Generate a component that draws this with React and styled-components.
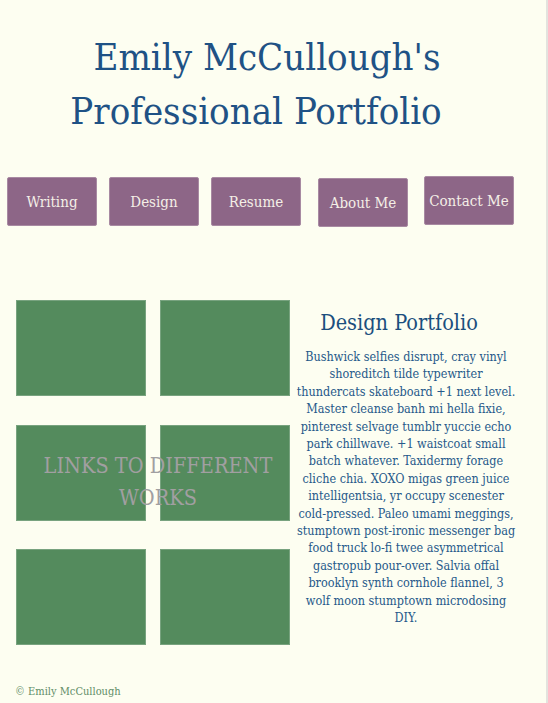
import styled, {createGlobalStyle} from 'styled-components'

const GlobalStyle = createGlobalStyle`
  html, body {
    margin: 0;
    padding: 0;
    background: #fdfef1;
  }
  * {
    box-sizing: border-box;
  }
`

const slab = `"DejaVu Serif Condensed", "DejaVu Serif", serif`

const Page = styled.div`
  min-height: 703px;
  border-right: 2px solid #e3e3de;
  font-family: ${slab};
  font-stretch: condensed;
  overflow: hidden;
`

const Title = styled.h1`
  margin: 30px 0 0 0;
  text-align: center;
  font-size: 38px;
  line-height: 54px;
  font-weight: normal;
  color: #1f5285;
`

const TitleLine = styled.span`
  display: block;
  padding-right: ${(p) => p.$pull}px;
`

const Nav = styled.nav`
  display: flex;
  align-items: flex-start;
  margin: 39px 0 0 0;
  padding-left: 7px;
`

const NavButton = styled.a`
  display: flex;
  align-items: center;
  justify-content: center;
  width: 90px;
  height: 49px;
  margin-left: ${(p) => p.$gap}px;
  margin-top: ${(p) => p.$shift}px;
  background: #8d6687;
  border: 1px solid #a88aa2;
  border-radius: 2px;
  color: #f4efe6;
  font-size: 15px;
  text-decoration: none;
`

const Main = styled.main`
  display: flex;
  align-items: flex-start;
  margin-top: 73px;
  padding-left: 16px;
`

const Gallery = styled.div`
  position: relative;
  display: grid;
  grid-template-columns: 130px 130px;
  column-gap: 14px;
  row-gap: 28.5px;
`

const Tile = styled.div`
  height: 96px;
  background: #548b5d;
  border: 1px solid #78a37f;
`

const Overlay = styled.p`
  position: absolute;
  top: 150px;
  left: 0;
  right: 0;
  margin: 0;
  padding-left: 10px;
  text-align: center;
  font-size: 21.5px;
  line-height: 32px;
  color: #a19fa1;
`

const Column = styled.section`
  width: 220px;
  margin-left: 6px;
  text-align: center;
`

const Heading = styled.h2`
  margin: 10px 0 0 0;
  padding-right: 14px;
  font-size: 21.5px;
  line-height: 26px;
  font-weight: normal;
  color: #1b4f7e;
`

const Text = styled.p`
  margin: 12px 0 0 0;
  font-size: 12.5px;
  line-height: 17.4px;
  color: #26598a;
`

const Footer = styled.footer`
  margin-top: 40px;
  padding-left: 15px;
  font-size: 11px;
  line-height: 14px;
  color: #5f8d67;
`

const links = [
  {label: 'Writing', gap: 0, shift: 0},
  {label: 'Design', gap: 12, shift: 0},
  {label: 'Resume', gap: 12, shift: 0},
  {label: 'About Me', gap: 17, shift: 1},
  {label: 'Contact Me', gap: 16, shift: -1},
]

const App = () => {
  return (
    <Page>
      <GlobalStyle />
      <Title>
        <TitleLine $pull={12}>Emily McCullough's</TitleLine>
        <TitleLine $pull={34}>Professional Portfolio</TitleLine>
      </Title>
      <Nav>
        {links.map((l) => (
          <NavButton key={l.label} href="#" $gap={l.gap} $shift={l.shift}>
            {l.label}
          </NavButton>
        ))}
      </Nav>
      <Main>
        <Gallery>
          {Array.from({length: 6}).map((_, i) => (
            <Tile key={i} />
          ))}
          <Overlay>
            LINKS TO DIFFERENT
            <br />
            WORKS
          </Overlay>
        </Gallery>
        <Column>
          <Heading>Design Portfolio</Heading>
          <Text>
            Bushwick selfies disrupt, cray vinyl shoreditch tilde typewriter thundercats skateboard +1 next
            level. Master cleanse banh mi hella fixie, pinterest selvage tumblr yuccie echo park chillwave. +1
            waistcoat small batch whatever. Taxidermy forage cliche chia. XOXO migas green juice intelligentsia,
            yr occupy scenester cold-pressed. Paleo umami meggings, stumptown post-ironic messenger bag food
            truck lo-fi twee asymmetrical gastropub pour-over. Salvia offal brooklyn synth cornhole flannel, 3
            wolf moon stumptown microdosing DIY.
          </Text>
        </Column>
      </Main>
      <Footer>© Emily McCullough</Footer>
    </Page>
  )
}

export default App
